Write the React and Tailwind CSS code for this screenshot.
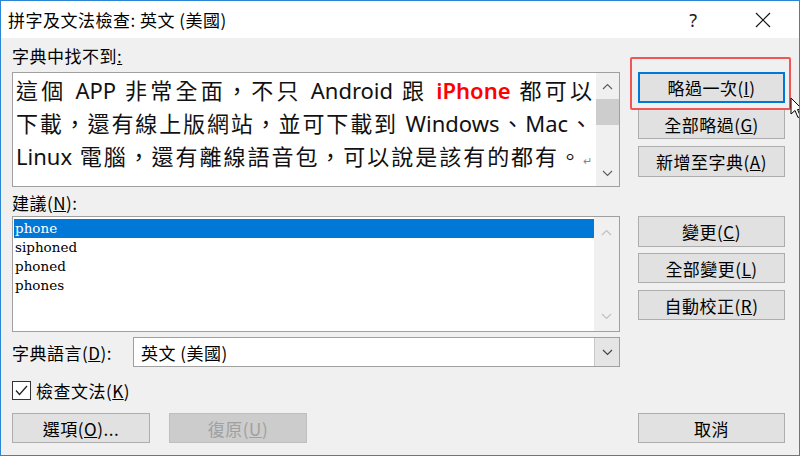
import React from "react";

const ui = "font-['Noto_Sans_CJK_TC','Noto_Sans',sans-serif]";

function Chevron({ up, color = "#606060" }) {
  return (
    <svg width="11" height="7" viewBox="0 0 11 7">
      <polyline
        points={up ? "1,6 5.5,1.5 10,6" : "1,1 5.5,5.5 10,1"}
        fill="none"
        stroke={color}
        strokeWidth="1.2"
      />
    </svg>
  );
}

function Btn({ children, focused, disabled, className = "" }) {
  let look = "border border-[#adadad] bg-[#e1e1e1] text-black";
  if (focused) look = "border-2 border-[#0078d7] bg-[#e1e1e1] text-black";
  if (disabled) look = "border border-[#bfbfbf] bg-[#cccccc] text-[#a0a0a0]";
  return (
    <div
      className={`h-[30px] flex items-center justify-center text-[17px] leading-none tracking-[0.5px] ${look} ${className}`}
    >
      {children}
    </div>
  );
}

const suggestions = ["phone", "siphoned", "phoned", "phones"];

export default function App() {
  return (
    <div
      className={`w-[800px] h-[456px] bg-[#f0f0f0] border border-[#2b87d6] flex flex-col relative overflow-hidden text-black ${ui}`}
    >
      {/* title bar */}
      <div className="h-[37px] bg-white flex items-center pl-[7px] pr-[28px] shrink-0">
        <span className="text-[17px] leading-none tracking-[0.5px]">
          拼字及文法檢查: 英文 (美國)
        </span>
        <div className="ml-auto flex items-center gap-[58px]">
          <span className="text-[18px] leading-none font-['Noto_Sans',sans-serif] text-[#222]">
            ?
          </span>
          <svg width="16" height="16" viewBox="0 0 16 16">
            <line x1="1" y1="1" x2="15" y2="15" stroke="#111" strokeWidth="1.1" />
            <line x1="15" y1="1" x2="1" y2="15" stroke="#111" strokeWidth="1.1" />
          </svg>
        </div>
      </div>

      <div className="flex-1 flex pl-[11px]">
        {/* left column */}
        <div className="w-[608px] flex flex-col">
          <div className="h-[34px] flex items-center text-[17px] leading-none tracking-[0.5px]">
            字典中找不到<u>:</u>
          </div>

          <div className="h-[115px] border border-[#a0a0a0] bg-white flex">
            <div className="flex-1 pl-[3px] pr-[4px] pt-[1px] text-[22px] leading-[33px] font-['Noto_Sans','Noto_Sans_CJK_TC',sans-serif] text-[#111]">
              <div className="text-justify [text-align-last:justify]">
                這個 APP 非常全面，不只 Android 跟{" "}
                <span className="text-[#ff0000] font-semibold">iPhone</span> 都可以
              </div>
              <div className="text-justify [text-align-last:justify]">
                下載，還有線上版網站，並可下載到 Windows、Mac、
              </div>
              <div className="text-justify [text-align-last:justify]">
                Linux 電腦，還有離線語音包，可以說是該有的都有。
                <span className="text-[11px] text-[#888]">↵</span>
              </div>
            </div>
            <div className="w-[23px] bg-[#f0f0f0] flex flex-col">
              <div className="h-[26px] flex items-center justify-center">
                <Chevron up />
              </div>
              <div className="h-[26px] bg-[#cdcdcd]" />
              <div className="flex-1" />
              <div className="h-[26px] flex items-center justify-center">
                <Chevron />
              </div>
            </div>
          </div>

          <div className="h-[29px] flex items-center pt-[2px] text-[17px] leading-none tracking-[0.5px]">
            建議(<u>N</u>):
          </div>

          <div className="h-[116px] border border-[#a0a0a0] bg-white flex">
            <div className="flex-1 pt-[2px] pl-[1px] font-['DejaVu_Serif',serif] text-[13.5px]">
              {suggestions.map((s, i) => (
                <div
                  key={s}
                  className={
                    i === 0
                      ? "h-[19px] leading-[18px] pl-[1px] bg-[#0078d7] text-white"
                      : "h-[19px] leading-[19px] pl-[1px] text-black"
                  }
                >
                  {s}
                </div>
              ))}
            </div>
            <div className="w-[25px] bg-[#f0f0f0] flex flex-col">
              <div className="h-[30px] flex items-center justify-center">
                <Chevron up color="#c0c0c0" />
              </div>
              <div className="flex-1" />
              <div className="h-[30px] flex items-center justify-center">
                <Chevron color="#c0c0c0" />
              </div>
            </div>
          </div>

          <div className="mt-[5px] h-[30px] flex items-center">
            <div className="w-[121px] text-[17px] leading-none tracking-[0.5px]">
              字典語言(<u>D</u>):
            </div>
            <div className="flex-1 h-full border border-[#a0a0a0] bg-white flex">
              <div className="flex-1 flex items-center pl-[7px] text-[17px] leading-none tracking-[0.5px]">
                英文 (美國)
              </div>
              <div className="w-[25px] border-l border-[#c8c8c8] bg-[#e5e5e5] flex items-center justify-center">
                <Chevron color="#444" />
              </div>
            </div>
          </div>

          <div className="mt-[13px] h-[20px] flex items-center gap-[5px]">
            <div className="w-[19px] h-[19px] border border-[#333] bg-white flex items-center justify-center">
              <svg width="13" height="11" viewBox="0 0 13 11">
                <polyline
                  points="1,5.5 4.5,9.5 12,1"
                  fill="none"
                  stroke="#222"
                  strokeWidth="1.3"
                />
              </svg>
            </div>
            <span className="text-[17px] leading-none tracking-[0.5px]">
              檢查文法(<u>K</u>)
            </span>
          </div>

          <div className="mt-[13px] flex gap-[19px]">
            <Btn className="w-[138px]">
              選項(<u>O</u>)...
            </Btn>
            <Btn disabled className="w-[138px]">
              復原(<u>U</u>)
            </Btn>
          </div>
        </div>

        {/* right column */}
        <div className="ml-[18px] w-[147px] flex flex-col">
          <Btn focused className="mt-[34px] h-[31px]">
            略過一次(<u>I</u>)
          </Btn>
          <Btn className="mt-[6px]">
            全部略過(<u>G</u>)
          </Btn>
          <Btn className="mt-[7px] h-[31px]">
            新增至字典(<u>A</u>)
          </Btn>
          <Btn className="mt-[39px] h-[31px]">
            變更(<u>C</u>)
          </Btn>
          <Btn className="mt-[6px]">
            全部變更(<u>L</u>)
          </Btn>
          <Btn className="mt-[7px]">
            自動校正(<u>R</u>)
          </Btn>
          <Btn className="mt-[93px]">取消</Btn>
        </div>
      </div>

      {/* annotation highlight */}
      <div className="absolute left-[629px] top-[56px] w-[161px] h-[53px] border-2 border-[#f05656] rounded-[2px]" />
      {/* mouse cursor */}
      <svg
        className="absolute left-[789px] top-[96px]"
        width="14"
        height="22"
        viewBox="0 0 14 22"
      >
        <path
          d="M1 1 L1 17 L5 13.5 L8 20.5 L10.5 19.5 L7.5 12.5 L12.5 12.5 Z"
          fill="#fff"
          stroke="#000"
          strokeWidth="1"
        />
      </svg>
    </div>
  );
}
